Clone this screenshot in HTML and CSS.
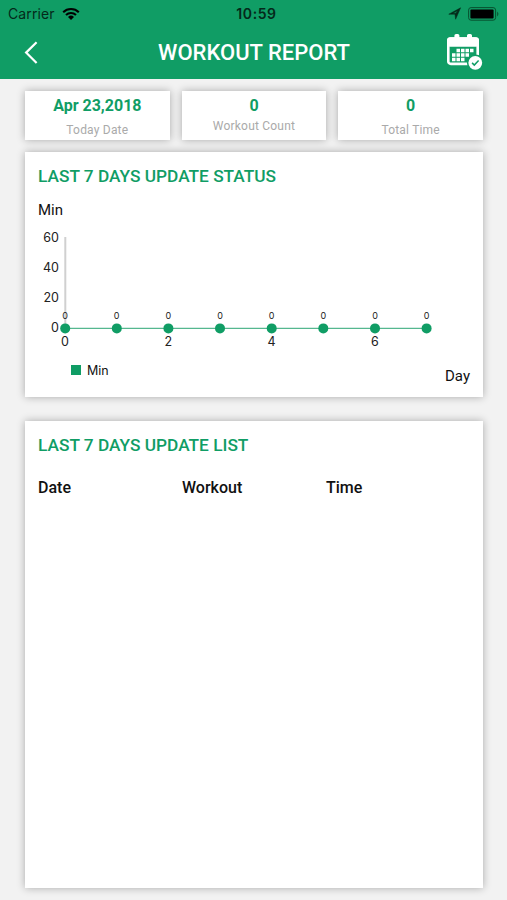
FILE: index.html
```html
<!DOCTYPE html>
<html lang="en">
<head>
    <meta charset="UTF-8">
    <title>Workout Report</title>
    <link rel="stylesheet" href="styles.css">
</head>
<body>
<header>
    <div class="status">
        <div class="carrier">
            <span>Carrier</span>
            <svg width="18" height="14" viewBox="0 0 18 14">
                <path d="M1.2 5.2a11.2 11.2 0 0 1 15.6 0M4 8a7.2 7.2 0 0 1 10 0" fill="none" stroke="#000" stroke-width="2.1"/>
                <path d="M6 9.9a4.5 4.5 0 0 1 6 0L9 12.9z"/>
            </svg>
        </div>
        <span class="clock">10:59</span>
        <div class="battery">
            <svg width="14" height="13" viewBox="0 0 14 13">
                <path d="M.8 7.2 12.6.8 7.6 12.2 7 7.2zM4.8 6.2H7.8L9.6 3.7z" fill="#042c1b" fill-rule="evenodd" stroke="#042c1b" stroke-width=".5"/>
            </svg>
            <svg width="33" height="14" viewBox="0 0 33 14">
                <rect x=".6" y=".6" width="27" height="12.6" rx="2.5" fill="none" stroke="#07502f"/>
                <rect x="2.4" y="2.4" width="23.2" height="9" rx="1"/>
                <path d="M29.2 4.5q2.4 2.4 0 4.9z" fill="#07502f"/>
            </svg>
        </div>
    </div>
    <div class="nav">
        <svg class="back" width="16" height="24" viewBox="0 0 16 24">
            <path d="M14.6 1.2 4.1 11.6 14.6 22" fill="none" stroke="#fff" stroke-width="2.2"/>
        </svg>
        <h1>WORKOUT REPORT</h1>
        <svg class="calendar" width="38" height="38" viewBox="0 .8 38 38">
            <rect x="1" y="4" width="32" height="9.5" rx="3" fill="#fff"/>
            <rect x="2.3" y="5.3" width="29.4" height="25.4" rx="2.5" fill="none" stroke="#fff" stroke-width="2.6"/>
            <path d="M8.4 9V2.4q0-1.6 1.600-1.600h1.800q1.600 0 1.600 1.600V9zM21 9V2.400q0-1.600 1.600-1.600h1.800q1.600 0 1.600 1.600V9z" fill="#fff"/>
            <g fill="#fff">
                <path d="M10.5 15.5H14V19h-3.500zM15 15.500h3.500V19H15zM19.500 15.500H23V19h-3.500zM24 15.500h3.500V19H24z"/>
                <path d="M6 20h3.500v3.500H6zM10.500 20H14v3.500h-3.500zM15 20h3.500v3.500H15zM19.500 20H23v3.500h-3.500z"/>
                <path d="M6 24.500h3.500V28H6zM10.500 24.500H14V28h-3.500zM15 24.500h3.500V28H15z"/>
            </g>
            <circle cx="29.3" cy="29.6" r="8.4" fill="#109d65"/>
            <circle cx="29.3" cy="29.6" r="6.9" fill="#fff"/>
            <path d="M26.100 29.700l2.200 2.200 4.300-4.500" fill="none" stroke="#109d65" stroke-width="1.500"/>
        </svg>
    </div>
</header>

<main>
    <div class="stats">
        <div class="box"><b>Apr 23,2018</b><span>Today Date</span></div>
        <div class="box count"><b>0</b><span>Workout Count</span></div>
        <div class="box"><b>0</b><span>Total Time</span></div>
    </div>

    <section class="card chart">
        <h2>LAST 7 DAYS UPDATE STATUS</h2>
        <p class="unit">Min</p>
        <svg class="plot" width="458" height="130" viewBox="25 220 458 130">
            <path d="M65.3 237v91" stroke="#d0d0d0" stroke-width="2"/>
            <path d="M65 328.3h362" stroke="#55b78f" stroke-width="1.2"/>
            <g class="ylabel">
                <text x="59" y="241.5">60</text>
                <text x="59" y="271.5">40</text>
                <text x="59" y="302">20</text>
                <text x="59" y="332">0</text>
            </g>
            <g class="xlabel">
                <text x="65" y="346">0</text>
                <text x="168.3" y="346">2</text>
                <text x="271.5" y="346">4</text>
                <text x="375" y="346">6</text>
            </g>
            <g class="value">
                <text x="65" y="318.5">0</text>
                <text x="116.7" y="318.5">0</text>
                <text x="168.3" y="318.5">0</text>
                <text x="220" y="318.5">0</text>
                <text x="271.5" y="318.5">0</text>
                <text x="323.3" y="318.5">0</text>
                <text x="375" y="318.5">0</text>
                <text x="426.6" y="318.5">0</text>
            </g>
            <g fill="#109d65">
                <circle cx="65.2" cy="328.4" r="5"/>
                <circle cx="116.8" cy="328.4" r="5"/>
                <circle cx="168.4" cy="328.4" r="5"/>
                <circle cx="220" cy="328.4" r="5"/>
                <circle cx="271.7" cy="328.4" r="5"/>
                <circle cx="323.3" cy="328.4" r="5"/>
                <circle cx="375" cy="328.4" r="5"/>
                <circle cx="426.6" cy="328.4" r="5"/>
            </g>
        </svg>
        <div class="legend">
            <i></i>
            <span>Min</span>
            <span class="day">Day</span>
        </div>
    </section>

    <section class="card list">
        <h2>LAST 7 DAYS UPDATE LIST</h2>
        <div class="row">
            <span>Date</span>
            <span>Workout</span>
            <span>Time</span>
        </div>
    </section>
</main>
</body>
</html>
```
FILE: styles.css
```css
* {
    box-sizing: border-box;
}
body {
    margin: 0;
    height: 900px;
    background: #f2f2f2;
    font-family: Roboto, sans-serif;
    color: #111;
    overflow: hidden;
}
h1, h2, p {
    margin: 0;
}
svg {
    display: block;
}
header {
    height: 79px;
    background: #109d65;
}
.status {
    height: 27px;
    padding: 0 6px 0 8px;
    display: grid;
    grid-template-columns: 1fr auto 1fr;
    align-items: center;
    font-family: Inter, sans-serif;
    color: #04291a;
}
.carrier, .battery {
    display: flex;
    align-items: center;
    gap: 6px;
}
.carrier {
    font-size: 14px;
    letter-spacing: .1px;
    gap: 7px;
}
.battery {
    justify-content: flex-end;
}
.clock {
    padding-left: 4px;
    font-size: 14px;
    font-weight: 600;
    letter-spacing: .6px;
}
.nav {
    height: 51px;
    padding: 0 23px 0 22px;
    display: grid;
    grid-template-columns: 38px 1fr 38px;
    align-items: center;
}
h1 {
    padding-left: 2px;
    text-align: center;
    font-size: 22px;
    font-weight: 500;
    color: #fff;
}
main {
    padding: 12px 24px 0 25px;
}
.stats {
    display: grid;
    grid-template-columns: 1fr 1fr 1fr;
    gap: 12px;
}
.box, .card {
    background: #fff;
    box-shadow: 0 0 8px rgba(0,0,0,.3);
}
.box {
    height: 49px;
    padding-top: 5px;
    display: flex;
    flex-direction: column;
    align-items: center;
}
.box b {
    font-size: 16px;
    line-height: 20px;
    color: #109d65;
}
.box span {
    margin-top: 4px;
    font-size: 12px;
    line-height: 20px;
    letter-spacing: .2px;
    color: #aaa;
}
.box.count span {
    margin-top: 0;
}
.card {
    padding: 12px 13px 0;
}
.chart {
    margin-top: 12px;
    height: 245px;
}
.list {
    margin-top: 24px;
    height: 467px;
}
h2 {
    font-size: 17.3px;
    line-height: 25px;
    font-weight: 500;
    color: #109d65;
}
.unit {
    margin-top: 11px;
    font-size: 15px;
    line-height: 20px;
}
.plot {
    margin: 0 -13px;
    font-family: Inter, sans-serif;
    fill: #222;
}
.ylabel, .xlabel {
    font-size: 12.5px;
}
.ylabel {
    text-anchor: end;
}
.xlabel, .value {
    text-anchor: middle;
}
.value {
    font-size: 9px;
}
.legend {
    display: flex;
    align-items: center;
    height: 40px;
    padding-left: 33px;
    font: 12.5px Inter, sans-serif;
}
.legend i {
    width: 10px;
    height: 10px;
    margin-right: 6px;
    background: #109d65;
}
.legend .day {
    margin: 11px 0 0 auto;
    font: 15px Roboto, sans-serif;
}
.row {
    margin-top: 19px;
    display: grid;
    grid-template-columns: 1fr 1fr 1fr;
    font-size: 16px;
    line-height: 22px;
    font-weight: 500;
}
```
